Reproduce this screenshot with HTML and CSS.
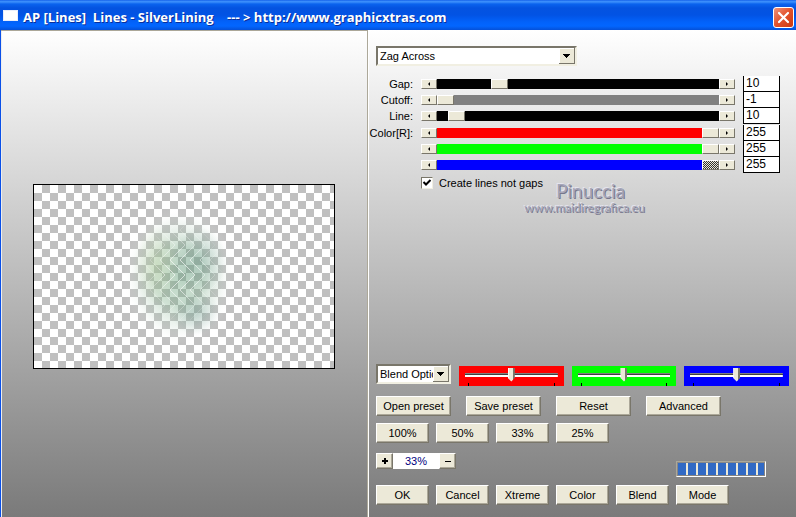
FILE: index.html
```html
<!DOCTYPE html>
<html lang="en">
<head>
<meta charset="utf-8">
<title>AP [Lines] Lines - SilverLining</title>
<link rel="stylesheet" href="styles.css">
</head>
<body>
<header class="titlebar">
  <span class="app-icon"></span>
  <h1 class="title">AP [Lines]  Lines - SilverLining    --- &gt; http://www.graphicxtras.com</h1>
  <button class="close" aria-label="Close"><svg width="13" height="13" viewBox="0 0 13 13"><path d="M2 2L11 11M11 2L2 11" stroke="#fff" stroke-width="2.2" stroke-linecap="round"/></svg></button>
</header>
<main class="window">
  <section class="preview-pane">
    <svg class="preview" viewBox="0 0 300 183" role="img" aria-label="Preview">
      <defs>
        <pattern id="check" width="16" height="16" patternUnits="userSpaceOnUse">
          <rect width="16" height="16" fill="#fff"/>
          <path d="M8 0h8v8H8zM0 8h8v8H0z" fill="#c0c0c0"/>
        </pattern>
        <pattern id="zag" width="20" height="30" patternUnits="userSpaceOnUse" patternTransform="translate(6 15)">
          <path d="M-20 0L-5 15L-20 30M0 0L15 15L0 30M10 0L25 15L10 30M-10 0L5 15L-10 30" fill="none" stroke="#fff" stroke-width=".8"/>
        </pattern>
        <radialGradient id="soft">
          <stop offset="0" stop-color="#6fa682" stop-opacity=".48"/>
          <stop offset=".45" stop-color="#80b08c" stop-opacity=".38"/>
          <stop offset=".75" stop-color="#b4d0bc" stop-opacity=".2"/>
          <stop offset="1" stop-color="#fff" stop-opacity="0"/>
        </radialGradient>
        <radialGradient id="teal">
          <stop offset="0" stop-color="#52857c" stop-opacity=".26"/>
          <stop offset="1" stop-color="#52857c" stop-opacity="0"/>
        </radialGradient>
        <radialGradient id="lime">
          <stop offset="0" stop-color="#c4d6a0" stop-opacity=".3"/>
          <stop offset="1" stop-color="#c4d6a0" stop-opacity="0"/>
        </radialGradient>
        <radialGradient id="fade">
          <stop offset=".3" stop-color="#fff"/>
          <stop offset="1" stop-color="#000"/>
        </radialGradient>
        <mask id="zagmask"><ellipse cx="148" cy="88" rx="44" ry="54" fill="url(#fade)"/></mask>
      </defs>
      <rect width="300" height="183" fill="url(#check)"/>
      <ellipse cx="145" cy="91" rx="56" ry="68" fill="url(#soft)"/>
      <ellipse cx="165" cy="76" rx="28" ry="34" fill="url(#teal)"/>
      <ellipse cx="162" cy="128" rx="24" ry="22" fill="url(#teal)"/>
      <ellipse cx="122" cy="80" rx="22" ry="40" fill="url(#lime)"/>
      <rect width="300" height="183" fill="url(#zag)" mask="url(#zagmask)" opacity=".75"/>
    </svg>
  </section>
  <section class="controls">
    <select class="combo pattern" aria-label="Pattern"><option>Zag Across</option></select>

    <div class="params">
      <div class="param">
        <label for="gap">Gap:</label>
        <div class="scroll"><button class="arrow left" aria-label="Less gap"></button><input id="gap" class="bar black" type="range" min="0" max="265" value="54"><button class="arrow right" aria-label="More gap"></button></div>
        <input class="value" type="text" value="10" aria-label="Gap value">
      </div>
      <div class="param">
        <label for="cutoff">Cutoff:</label>
        <div class="scroll"><button class="arrow left" aria-label="Less cutoff"></button><input id="cutoff" class="bar gray" type="range" min="0" max="265" value="0"><button class="arrow right" aria-label="More cutoff"></button></div>
        <input class="value" type="text" value="-1" aria-label="Cutoff value">
      </div>
      <div class="param">
        <label for="line">Line:</label>
        <div class="scroll"><button class="arrow left" aria-label="Less line"></button><input id="line" class="bar black" type="range" min="0" max="265" value="11"><button class="arrow right" aria-label="More line"></button></div>
        <input class="value" type="text" value="10" aria-label="Line value">
      </div>
      <div class="param first-color">
        <label for="red">Color[R]:</label>
        <div class="scroll"><button class="arrow left" aria-label="Less red"></button><input id="red" class="bar red" type="range" min="0" max="255" value="255"><button class="arrow right" aria-label="More red"></button></div>
        <input class="value" type="text" value="255" aria-label="Red value">
      </div>
      <div class="param">
        <span></span>
        <div class="scroll"><button class="arrow left" aria-label="Less green"></button><input class="bar green" type="range" min="0" max="255" value="255" aria-label="Green"><button class="arrow right" aria-label="More green"></button></div>
        <input class="value" type="text" value="255" aria-label="Green value">
      </div>
      <div class="param">
        <span></span>
        <div class="scroll"><button class="arrow left" aria-label="Less blue"></button><input class="bar blue active" type="range" min="0" max="255" value="255" aria-label="Blue"><button class="arrow right" aria-label="More blue"></button></div>
        <input class="value" type="text" value="255" aria-label="Blue value">
      </div>
    </div>

    <label class="check"><input type="checkbox" checked>Create lines not gaps</label>

    <div class="watermark">
      <div class="mark-name">Pinuccia</div>
      <div class="mark-site">www.maidiregrafica.eu</div>
    </div>

    <div class="bottom">
      <div class="blend-row">
        <select class="combo blend" aria-label="Blend options"><option>Blend Options</option></select>
        <div class="track red"><input type="range" aria-label="Red balance"></div>
        <div class="track green"><input type="range" aria-label="Green balance"></div>
        <div class="track blue"><input type="range" aria-label="Blue balance"></div>
      </div>
      <div class="presets">
        <button class="btn">Open preset</button>
        <button class="btn">Save preset</button>
        <button class="btn">Reset</button>
        <button class="btn">Advanced</button>
      </div>
      <div class="row">
        <button class="btn">100%</button>
        <button class="btn">50%</button>
        <button class="btn">33%</button>
        <button class="btn">25%</button>
      </div>
      <div class="zoom-row">
        <div class="zoom">
          <button class="btn" aria-label="Zoom in"><svg width="6" height="6" viewBox="0 0 6 6"><path d="M2 0h2v2h2v2H4v2H2V4H0V2h2z"/></svg></button>
          <input type="text" value="33%" aria-label="Zoom">
          <button class="btn" aria-label="Zoom out"><svg width="6" height="6" viewBox="0 0 6 6"><path d="M0 3h6v1H0z"/></svg></button>
        </div>
        <div class="progress" role="progressbar" aria-label="Progress"></div>
      </div>
      <div class="row actions">
        <button class="btn">OK</button>
        <button class="btn">Cancel</button>
        <button class="btn">Xtreme</button>
        <button class="btn">Color</button>
        <button class="btn">Blend</button>
        <button class="btn">Mode</button>
      </div>
    </div>
  </section>
</main>
</body>
</html>
```
FILE: styles.css
```css
* { box-sizing: border-box; }

:root {
  --face: #ece9d8;
  --shade: #aca899;
}

body {
  margin: 0;
  min-height: 100vh;
  display: flex;
  flex-direction: column;
  background: #0a50e8;
  color: #000;
  font: 11px/14px "Liberation Sans", Arial, sans-serif;
}

button, input, select { font: inherit; color: inherit; margin: 0; border-radius: 0; }

/* Title bar */
.titlebar {
  height: 30px;
  display: flex;
  align-items: center;
  padding: 4px 2px 0 3px;
  background: linear-gradient(#0a54e4 0, #3a8dfb 1px, #3a8dfb 2px, #0a63ee 4px, #0453e0 8px, #0253e4 15px, #0262fa 22px, #0266ff 26px, #0450d8 30px);
}
.app-icon { width: 15px; height: 11px; margin-top: -3px; background: #fff; border: 1px solid #e9eefb; }
.title {
  flex: 1;
  margin: 0 0 0 5px;
  color: #fff;
  font: bold 13px/18px "Open Sans", "Noto Sans", sans-serif;
  text-shadow: 1px 1px 0 #0a2f9a;
  white-space: pre;
}
.close {
  width: 21px;
  height: 21px;
  padding: 0;
  display: grid;
  place-items: center;
  border: 1px solid #fff;
  border-radius: 3px;
  background: linear-gradient(135deg, #f0937a, #e2512c 50%, #cc3a10);
}

/* Window body */
.window {
  flex: 1;
  display: grid;
  grid-template-columns: 367px 1fr;
  margin-left: 1px;
  background: linear-gradient(#fff, #7a7a7a);
}
.preview-pane {
  display: flex;
  align-items: center;
  justify-content: center;
  padding-top: 4px;
  border: solid #aca899;
  border-width: 1px 1px 0 0;
  box-shadow: inset 1px 0 #eee, 1px 0 #fff;
}
.preview { width: 302px; height: 185px; border: 1px solid #000; }

.controls {
  display: flex;
  flex-direction: column;
  padding: 16px 7px 12px 8px;
}

/* Drop-downs */
.combo {
  appearance: none;
  height: 20px;
  padding: 0 20px 0 2px;
  border: 2px solid;
  border-color: #79766a #f1efe2 #f1efe2 #79766a;
  background:
    url("data:image/svg+xml,%3Csvg xmlns='http://www.w3.org/2000/svg' width='16' height='16'%3E%3Cpath d='M0 0h16v16H0z' fill='%2379766a'/%3E%3Cpath d='M0 0h15v15H0z' fill='%23fff'/%3E%3Cpath d='M1 1h14v14H1z' fill='%23ece9d8'/%3E%3Cpath d='M4 6h7v1H4zM5 7h5v1H5zM6 8h3v1H6zM7 9h1v1H7z'/%3E%3C/svg%3E") right center no-repeat #fff;
}
.pattern { width: 201px; }
.blend { width: 75px; padding-right: 16px; text-overflow: clip; }

/* Scroll bars with value boxes */
.params { margin-top: 10px; padding-right: 9px; }
.param {
  display: grid;
  grid-template-columns: 37px 1fr 37px;
  column-gap: 8px;
  align-items: center;
  height: 16px;
}
.param label { justify-self: end; white-space: nowrap; line-height: 16px; }
.first-color { margin-top: 1px; }
.scroll { display: flex; height: 10px; }
.arrow {
  width: 16px;
  height: 10px;
  padding: 0;
  display: grid;
  place-items: center;
  background: var(--face);
  border: 1px solid;
  border-color: #fff #79766a #79766a #fff;
}
.arrow::before { content: ""; border: 2px solid transparent; }
.left::before { border-right-color: #000; border-left-width: 0; }
.right::before { border-left-color: #000; border-right-width: 0; }
.bar { appearance: none; flex: 1; min-width: 0; height: 10px; }
.bar::-webkit-slider-thumb {
  appearance: none;
  width: 17px;
  height: 10px;
  background: var(--face);
  border: 1px solid;
  border-color: #fff #79766a #79766a #fff;
}
.active::-webkit-slider-thumb { background: repeating-conic-gradient(#333 0 25%, #ece9d8 0 50%) 0 0 / 2px 2px; }
.black { background: #000; }
.gray { background: #808080; }
.red { background: #f00; }
.green { background: #0f0; }
.blue { background: #00f; }
.value {
  width: 100%;
  height: 16px;
  padding: 0 0 2px 2px;
  border: 1px solid #000;
  border-top: 0;
  background: #fff;
  font-size: 12px;
}

/* Check box */
.check { display: flex; align-items: center; gap: 6px; height: 14px; margin: 3px 0 0 45px; }
.check input {
  appearance: none;
  width: 12px;
  height: 12px;
  border: 1px solid;
  border-color: #79766a #f1efe2 #f1efe2 #79766a;
  background: #fff;
}
.check input:checked {
  background: url("data:image/svg+xml,%3Csvg xmlns='http://www.w3.org/2000/svg' width='10' height='10'%3E%3Cpath d='M1.500 4L4 6.500L8.500 2' fill='none' stroke='%23000' stroke-width='2'/%3E%3C/svg%3E") center no-repeat #fff;
}

.watermark {
  margin-top: -9px;
  text-align: center;
  color: #a6a6b8;
  font-family: Lato, sans-serif;
  text-shadow: 1px 1px 0 #77778c, -1px -1px 0 #e4e4ee;
}
.mark-name { font-size: 19px; line-height: 20px; padding-left: 16px; }
.mark-site { font-size: 12px; line-height: 14px; padding-left: 4px; }

/* Lower controls */
.bottom { margin-top: auto; display: flex; flex-direction: column; }
.blend-row { display: grid; grid-template-columns: 75px 1fr 1fr 1fr; column-gap: 8px; align-items: end; }
.blend { align-self: start; }
.track { height: 20px; margin-top: 2px; padding: 0 6px; position: relative; }
.track::before, .track::after { content: ""; position: absolute; bottom: 0; width: 1px; height: 3px; background: #000; }
.track::before { left: 9px; }
.track::after { right: 9px; }
.track input {
  appearance: none;
  display: block;
  width: 100%;
  height: 17px;
  background: linear-gradient(#808080 0 1px, #404040 1px 2px, #fff 2px) center / 100% 4px no-repeat;
}
.track input::-webkit-slider-thumb {
  appearance: none;
  width: 7px;
  height: 14px;
  background: linear-gradient(90deg, #fff 0 1px, #ece9d8 1px 5px, #79766a 5px);
  clip-path: polygon(0 0, 100% 0, 100% 75%, 50% 100%, 0 75%);
}

.btn {
  padding: 0;
  height: 20px;
  line-height: 14px;
  background: var(--face);
  border: 1px solid;
  border-color: #fff #79766a #79766a #fff;
  box-shadow: inset -1px -1px var(--shade);
  white-space: nowrap;
}
.presets { display: flex; gap: 15px; margin-top: 10px; }
.presets .btn { width: 75px; }
.row { display: flex; gap: 7px; margin-top: 7px; }
.row .btn { width: 53px; }
.row.actions { margin-top: 8px; }
.zoom-row { display: flex; justify-content: space-between; align-items: flex-start; margin-top: 10px; padding-right: 23px; }
.zoom { display: flex; }
.zoom .btn { width: 17px; height: 16px; display: grid; place-items: center; }
.zoom input { width: 46px; height: 16px; padding: 0; border: 0; background: #fff; color: #000080; text-align: center; }
.progress {
  width: 90px;
  height: 16px;
  margin-top: 8px;
  padding: 1px;
  border: 1px solid;
  border-color: #aca899 #fff #fff #aca899;
  background: repeating-linear-gradient(90deg, #316ac5 0 8px, var(--face) 8px 10px) content-box var(--face);
}
```
